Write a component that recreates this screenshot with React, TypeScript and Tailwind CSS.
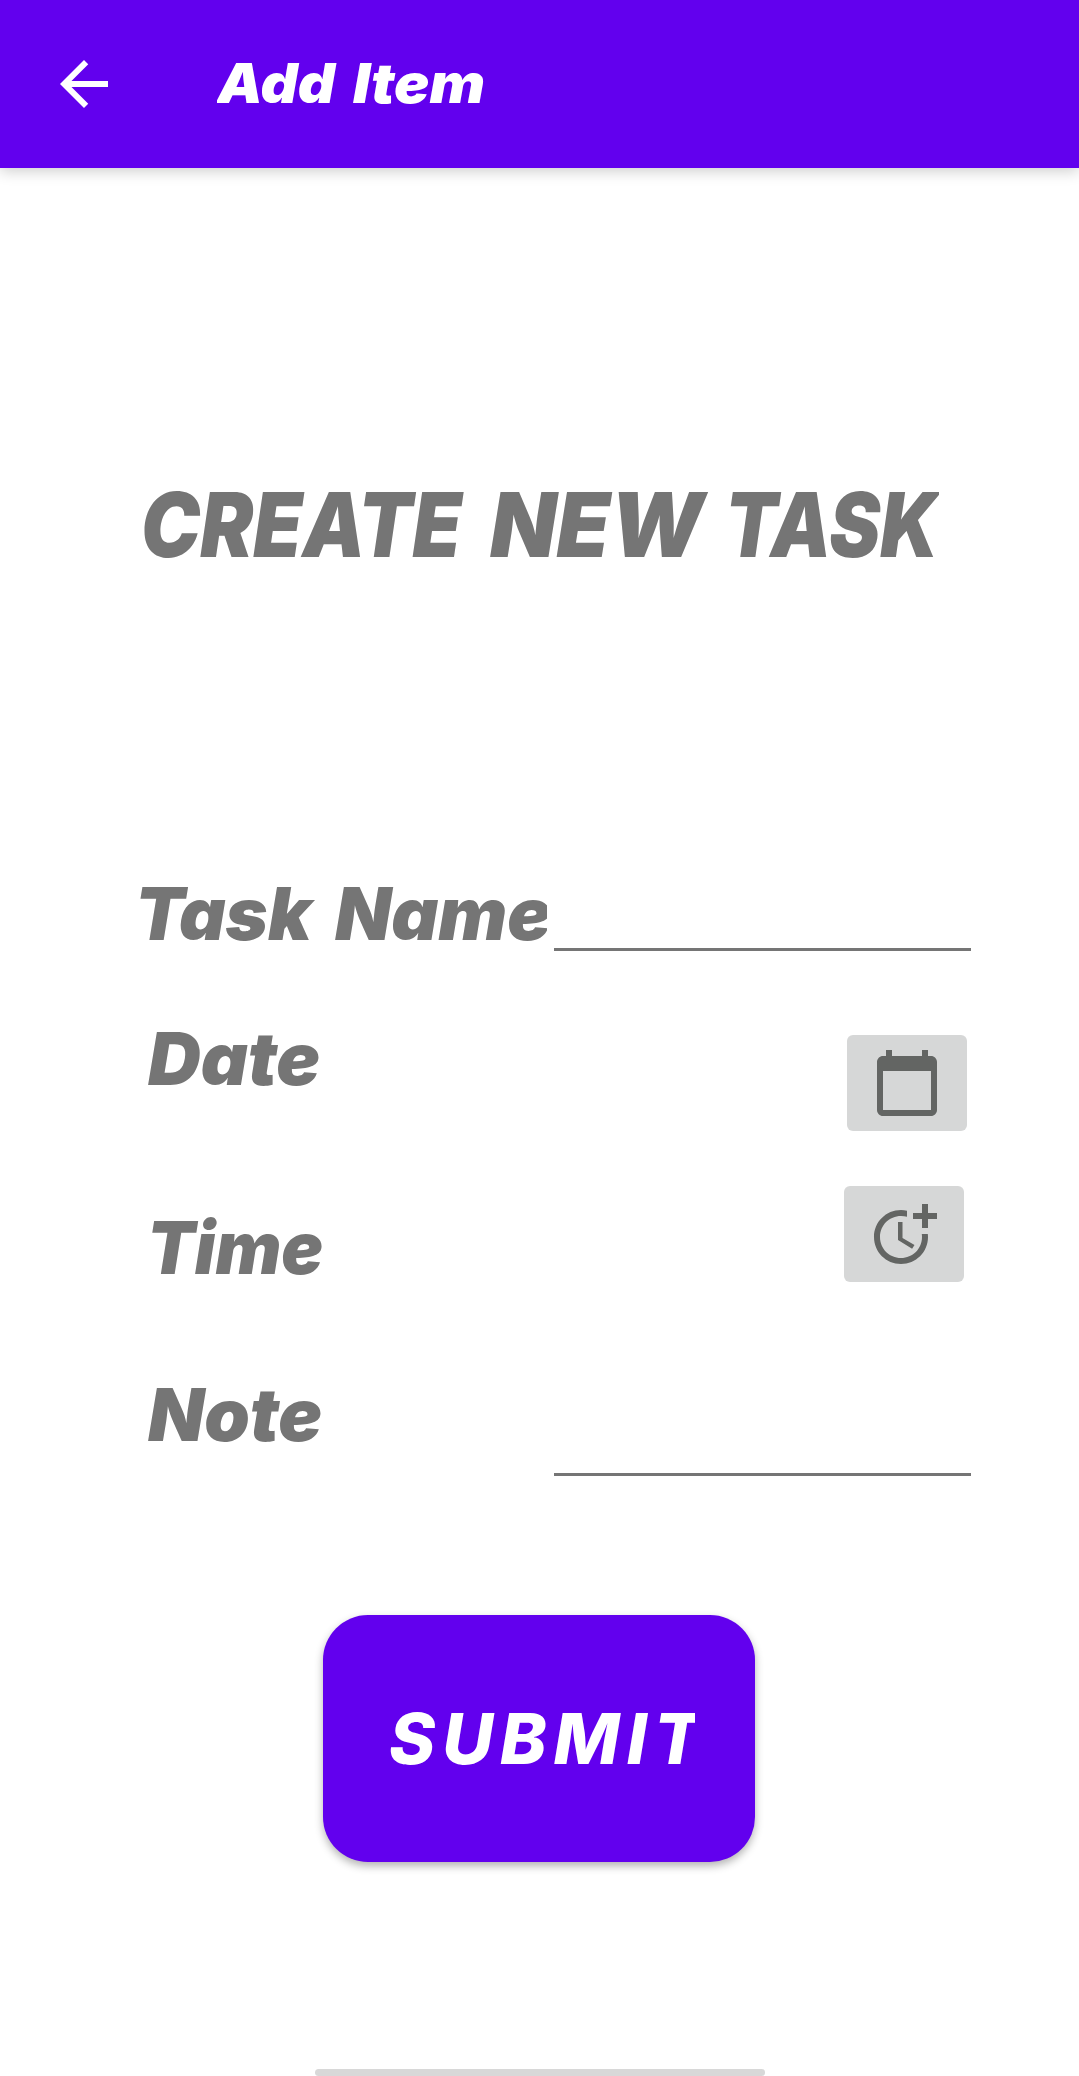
import React from "react";

const display = "font-['Inter',sans-serif] font-black italic leading-none whitespace-nowrap";

function BackIcon() {
  return (
    <svg viewBox="0 0 24 24" className="size-[72px] fill-white">
      <path d="M20 11H7.83l5.59-5.59L12 4l-8 8 8 8 1.41-1.41L7.83 13H20v-2z" />
    </svg>
  );
}

function CalendarIcon() {
  return (
    <svg viewBox="0 0 24 24" className="size-[72px] fill-[#636563]">
      <path d="M20 3h-1V1h-2v2H7V1H5v2H4c-1.100 0-2 .9-2 2v16c0 1.100.9 2 2 2h16c1.100 0 2-.9 2-2V5c0-1.100-.9-2-2-2zm0 18H4V8h16v13z" />
    </svg>
  );
}

function MoreTimeIcon() {
  return (
    <svg viewBox="0 0 24 24" className="size-[72px] fill-[#636563]">
      <path d="M10 8v6l4.700 2.900.8-1.200-4-2.400V8z" />
      <path d="M17.920 12c.05.330.08.660.08 1 0 3.900-3.100 7-7 7s-7-3.100-7-7 3.100-7 7-7c.7 0 1.370.1 2 .290V4.230C12.360 4.080 11.690 4 11 4c-5 0-9 4-9 9s4 9 9 9 9-4 9-9c0-.340-.020-.670-.060-1h-2.020z" />
      <path d="M20 5V2h-2v3h-3v2h3v3h2V7h3V5z" />
    </svg>
  );
}

export default function App() {
  return (
    <div className="flex h-[2076px] w-[1079px] flex-col overflow-hidden bg-white text-[#757575]">
      <header className="flex h-[168px] shrink-0 items-start bg-[#6200ee] pl-12 text-white shadow-[0_3px_14px_rgba(0,0,0,0.2)]">
        <button aria-label="Back" className="mt-12">
          <BackIcon />
        </button>
        <h1 className={`${display} ml-[97px] mt-[56px] flex w-[267px] overflow-x-clip text-[55px]`}>
          <span className="w-[136px] shrink-0 origin-left scale-x-[1.05]">Add</span>
          <span className="origin-left scale-x-[1.07]">Item</span>
        </h1>
      </header>

      <main className="flex flex-col">
        <h2 className={`${display} ml-[141px] mt-[312px] flex h-[89px] w-[798px] overflow-x-clip text-[89px]`}>
          <span className="w-[349px] shrink-0 origin-left scale-x-[0.89]">CREATE</span>
          <span className="w-[235px] shrink-0 origin-left scale-x-[0.97]">NEW</span>
          <span className="origin-left scale-x-[0.86]">TASK</span>
        </h2>

        <div className="mt-[308px] flex h-[74px]">
          <label className={`${display} ml-[135px] flex w-[412px] overflow-x-clip text-[73px]`}>
            <span className="w-[200px] shrink-0 origin-left scale-x-[0.99]">Task</span>
            <span>Name</span>
          </label>
          <input aria-label="Task name" className="ml-[7px] w-[417px] border-b-[3px] border-[#757575] outline-none" />
        </div>

        <div className="mt-[71px] flex h-[109px] items-start justify-between pl-[148px] pr-[112px]">
          <span className={`${display} text-[73px]`}>Date</span>
          <button aria-label="Pick date" className="mt-[13px] flex h-24 w-[120px] items-center justify-center rounded-[6px] bg-[#d6d7d7]">
            <CalendarIcon />
          </button>
        </div>

        <div className="mt-[55px] flex h-[96px] items-start justify-between pl-[147px] pr-[115px]">
          <span className={`${display} mt-[25px] origin-left scale-x-[0.955] text-[73px]`}>Time</span>
          <button aria-label="Pick time" className="flex h-24 w-[120px] items-center justify-center rounded-[6px] bg-[#d6d7d7]">
            <MoreTimeIcon />
          </button>
        </div>

        <div className="mt-[96px] flex h-[98px] items-start">
          <label className={`${display} ml-[148px] w-[406px] text-[73px]`}>Note</label>
          <input aria-label="Note" className="h-full w-[417px] border-b-[3px] border-[#757575] outline-none" />
        </div>

        <button className="ml-[323px] mt-[139px] flex h-[247px] w-[432px] items-start rounded-[45px] bg-[#6200ee] pl-[66px] pt-[89px] text-white shadow-[0_4px_9px_rgba(0,0,0,0.3)]">
          <span className="w-[306px] overflow-x-clip whitespace-nowrap text-left font-['Inter',sans-serif] text-[70px] font-extrabold italic leading-none tracking-[7px]">SUBMIT</span>
        </button>

        <div className="ml-[315px] mt-[207px] h-[7px] w-[450px] rounded-full bg-[#d8d8d8]" />
      </main>
    </div>
  );
}
